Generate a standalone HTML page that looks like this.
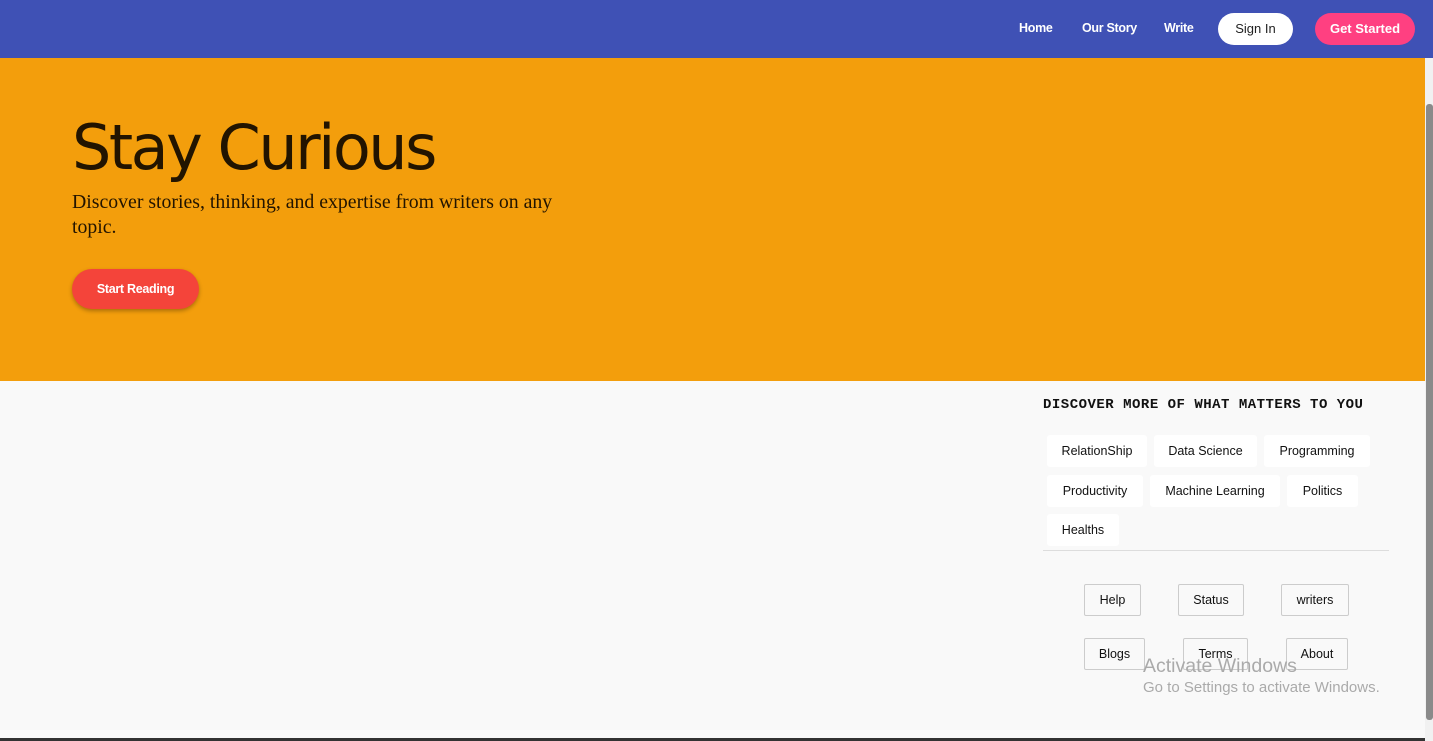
<!DOCTYPE html>
<html><head><meta charset="utf-8"><style>
*{margin:0;padding:0;box-sizing:border-box}
body{width:1433px;height:741px;overflow:hidden;background:#f9f9f9;font-family:"Liberation Sans",Arial,sans-serif;position:relative}
.nav{position:absolute;left:0;top:0;width:1433px;height:58px;background:#3f51b5}
.nav a{position:absolute;top:21px;color:#fff;font-size:12.5px;font-weight:bold;text-decoration:none;letter-spacing:-0.3px}
.btn{position:absolute;top:13px;height:32px;border-radius:16px;font-size:13px;font-weight:bold;text-align:center;line-height:32px}
.hero{position:absolute;left:0;top:58px;width:1425px;height:323px;background:#f39e0c}
h1{position:absolute;left:72px;top:112px;font-family:"DejaVu Sans",sans-serif;font-weight:normal;font-size:62px;color:#221400;letter-spacing:-2.5px;line-height:72px}
.sub{position:absolute;left:72px;top:190px;width:500px;font-family:"Liberation Serif",serif;font-size:19.8px;line-height:25px;color:#221400}
.sr{position:absolute;left:72px;top:269px;width:127px;height:40px;border-radius:20px;background:#f4443a;color:#fff;font-size:12.5px;font-weight:bold;text-align:center;line-height:40px;box-shadow:0 2px 4px rgba(0,0,0,.3);letter-spacing:-0.3px}
.disc{position:absolute;left:1043px;top:397px;font-family:"Liberation Mono",monospace;font-weight:bold;font-size:14px;color:#111;letter-spacing:0.5px}
.tag{position:absolute;height:32px;background:#fff;border-radius:3px;font-size:12.5px;color:#111;line-height:32px;text-align:center}
.hr{position:absolute;left:1043px;top:550px;width:346px;height:1px;background:#ddd}
.fb{position:absolute;height:32px;border:1px solid #ccc;border-radius:2px;font-size:12.5px;color:#111;line-height:30px;text-align:center}
.wm{position:absolute;left:1143px;color:#aaa}
.sb{position:absolute;left:1425px;top:58px;width:8px;height:683px;background:#f1f1f1}
.th{position:absolute;left:1426px;top:104px;width:7px;height:616px;background:#8a8a8a;border-radius:3px}
</style></head><body>
<div class="nav">
<a style="left:1019px">Home</a>
<a style="left:1082px">Our Story</a>
<a style="left:1164px">Write</a>
<div class="btn" style="left:1218px;width:75px;background:#fff;color:#222;font-weight:normal">Sign In</div>
<div class="btn" style="left:1315px;width:100px;background:#ff4081;color:#fff">Get Started</div>
</div>
<div class="hero"></div>
<h1>Stay Curious</h1>
<div class="sub">Discover stories, thinking, and expertise from writers on any topic.</div>
<div class="sr">Start Reading</div>
<div class="disc">DISCOVER MORE OF WHAT MATTERS TO YOU</div>
<div class="tag" style="left:1047px;top:435px;width:100px">RelationShip</div>
<div class="tag" style="left:1154px;top:435px;width:103px">Data Science</div>
<div class="tag" style="left:1264px;top:435px;width:106px">Programming</div>
<div class="tag" style="left:1047px;top:475px;width:96px">Productivity</div>
<div class="tag" style="left:1150px;top:475px;width:130px">Machine Learning</div>
<div class="tag" style="left:1287px;top:475px;width:71px">Politics</div>
<div class="tag" style="left:1047px;top:514px;width:72px">Healths</div>
<div class="hr"></div>
<div class="fb" style="left:1084px;top:584px;width:57px">Help</div>
<div class="fb" style="left:1178px;top:584px;width:66px">Status</div>
<div class="fb" style="left:1281px;top:584px;width:68px">writers</div>
<div class="fb" style="left:1084px;top:638px;width:61px">Blogs</div>
<div class="fb" style="left:1183px;top:638px;width:65px">Terms</div>
<div class="fb" style="left:1286px;top:638px;width:62px">About</div>
<div class="wm" style="top:655px;font-size:19.5px">Activate Windows</div>
<div class="wm" style="top:679px;font-size:15px">Go to Settings to activate Windows.</div>
<div class="sb"></div><div class="th"></div>
<div style="position:absolute;left:0;top:738px;width:1425px;height:3px;background:#333"></div>
</body></html>
